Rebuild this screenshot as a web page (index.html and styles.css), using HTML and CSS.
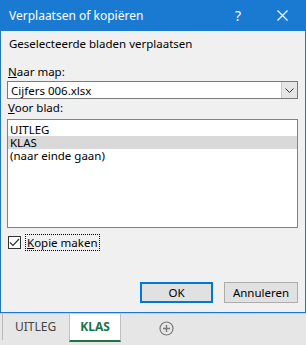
FILE: index.html
```html
<!DOCTYPE html>
<html lang="nl">
<head>
    <meta charset="UTF-8">
    <title>Verplaatsen of kopiëren</title>
    <link rel="stylesheet" href="styles.css">
</head>
<body>
    <div class="dialog">
        <div class="titlebar">
            <span class="title">Verplaatsen of kopiëren</span>
            <span class="help">?</span>
            <svg class="close" width="11" height="11" viewBox="0 0 11 11">
                <path d="M0.5 0.5 L10.5 10.5 M10.5 0.5 L0.5 10.5" stroke="#fff" stroke-width="1.2" fill="none"/>
            </svg>
        </div>
        <div class="content">
            <div class="heading">Geselecteerde bladen verplaatsen</div>
            <div class="label"><u>N</u>aar map:</div>
            <div class="combo">
                <span class="combo-text">Cijfers 006.xlsx</span>
                <span class="combo-btn">
                    <svg width="9" height="5" viewBox="0 0 9 5">
                        <path d="M0.5 0.5 L4.5 4.5 L8.5 0.5" stroke="#333" stroke-width="1" fill="none"/>
                    </svg>
                </span>
            </div>
            <div class="label label-list"><u>V</u>oor blad:</div>
            <ul class="listbox">
                <li>UITLEG</li>
                <li class="selected">KLAS</li>
                <li>(naar einde gaan)</li>
            </ul>
            <div class="check-row">
                <span class="checkbox">
                    <svg width="11" height="11" viewBox="0 0 11 11">
                        <path d="M1 5.5 L4 8.5 L10 2" stroke="#333" stroke-width="1.2" fill="none"/>
                    </svg>
                </span>
                <span class="check-label"><u>K</u>opie maken</span>
            </div>
            <div class="buttons">
                <button class="btn btn-default">OK</button>
                <button class="btn">Annuleren</button>
            </div>
        </div>
    </div>
    <div class="tabbar">
        <div class="tab">UITLEG</div>
        <div class="tab tab-active">KLAS</div>
        <svg class="add" width="15" height="15" viewBox="0 0 15 15">
            <circle cx="7.5" cy="7.5" r="6.5" stroke="#7a7a7a" stroke-width="1.2" fill="none"/>
            <path d="M7.5 4 V11 M4 7.5 H11" stroke="#7a7a7a" stroke-width="1.4"/>
        </svg>
    </div>
</body>
</html>
```

FILE: styles.css
```css
body{
    margin: 0;
    width: 306px;
    height: 345px;
    overflow: hidden;
    font-family: "Segoe UI", "Noto Sans", sans-serif;
    font-size: 11.5px;
    color: #000;
    background: #e6e6e6;
}
.dialog{
    height: 313px;
    box-sizing: border-box;
    background: #f0f0f0;
    border: 1px solid #1a7ad2;
    border-top: none;
    display: flex;
    flex-direction: column;
}
.titlebar{
    height: 31px;
    margin: 0 -1px;
    background: #1a7ad2;
    color: #fff;
    font-size: 12px;
    display: flex;
    align-items: center;
    padding-left: 9px;
    flex-shrink: 0;
}
.title{
    flex: 1;
}
.help{
    font-size: 14px;
    margin-right: 36px;
}
.close{
    margin-right: 18px;
}
.content{
    padding: 5px 7px 0 6px;
    display: flex;
    flex-direction: column;
    flex: 1;
}
.heading{
    line-height: 16px;
    padding-left: 2px;
}
.label{
    line-height: 16px;
    margin-top: 12px;
    padding-left: 1px;
}
.label-list{
    margin-top: 1px;
}
.combo{
    margin-top: 1px;
    height: 18px;
    box-sizing: border-box;
    border: 1px solid #7a7a7a;
    background: #fff;
    display: flex;
    align-items: center;
}
.combo-text{
    flex: 1;
    padding-left: 3px;
}
.combo-btn{
    width: 15px;
    height: 16px;
    background: #e5e5e5;
    border-left: 1px solid #c8c8c8;
    display: flex;
    align-items: center;
    justify-content: center;
}
.listbox{
    list-style: none;
    margin: 3px 0 0 0;
    padding: 3px 0 0 0;
    height: 109px;
    box-sizing: border-box;
    border: 1px solid #828282;
    background: #fff;
}
.listbox li{
    line-height: 13px;
    height: 13px;
    padding-left: 2px;
}
.listbox .selected{
    background: #d9d9d9;
}
.check-row{
    margin-top: 5px;
    display: flex;
    align-items: center;
    height: 18px;
}
.checkbox{
    width: 13px;
    height: 13px;
    box-sizing: border-box;
    border: 1px solid #333;
    background: #fff;
    display: flex;
    align-items: center;
    justify-content: center;
    margin-left: 1px;
}
.check-label{
    margin-left: 4px;
    padding: 0 1px;
    line-height: 15px;
    border: 1px dotted #000;
}
.buttons{
    margin-top: auto;
    margin-bottom: 9px;
    display: flex;
    justify-content: flex-end;
    gap: 11px;
}
.btn{
    width: 74px;
    height: 21px;
    box-sizing: border-box;
    font-family: inherit;
    font-size: 11.5px;
    background: #e1e1e1;
    border: 1px solid #adadad;
    padding: 0;
}
.btn-default{
    border: 2px solid #0078d7;
    width: 73px;
}
.tabbar{
    height: 32px;
    display: flex;
    align-items: flex-start;
    border-top: 1px solid #d0d0d0;
    padding-left: 2px;
}
.tab{
    height: 26px;
    line-height: 26px;
    padding: 0 13px 0 12px;
    color: #444;
    font-size: 12px;
    border-left: 1px solid #b8b8b8;
}
.tab-active{
    background: #fff;
    color: #217346;
    font-weight: bold;
    padding: 0 10px;
    border-left: 1px solid #c0c0c0;
    border-right: 1px solid #c0c0c0;
    border-bottom: 2px solid #217346;
}
.add{
    margin: 7px 0 0 38px;
}
```
